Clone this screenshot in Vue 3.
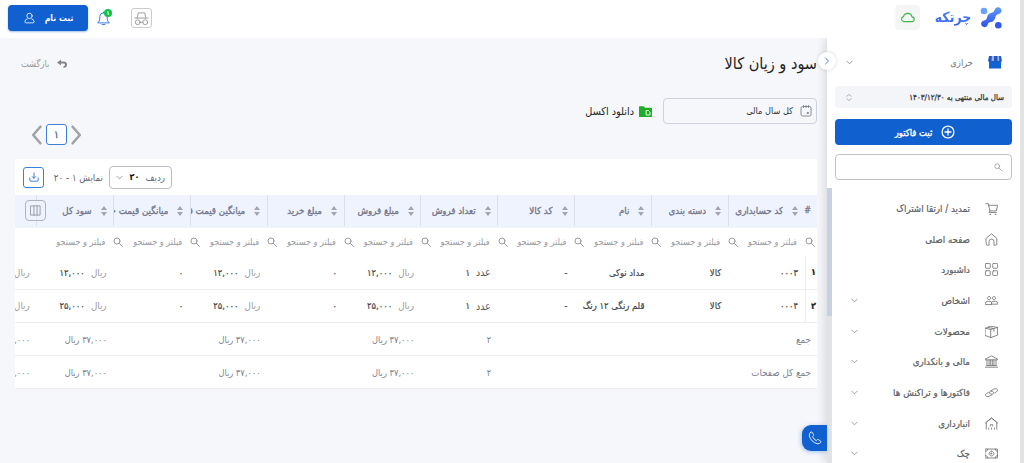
<script setup>
import { ref } from 'vue';

const search = ref('');

const menu = [
    { title: 'تمدید / ارتقا اشتراک', icon: 'cart' },
    { title: 'صفحه اصلی', icon: 'home' },
    { title: 'داشبورد', icon: 'grid' },
    { title: 'اشخاص', icon: 'people', sub: true },
    { title: 'محصولات', icon: 'box', sub: true },
    { title: 'مالی و بانکداری', icon: 'bank', sub: true },
    { title: 'فاکتورها و تراکنش ها', icon: 'link', sub: true },
    { title: 'انبارداری', icon: 'store', sub: true },
    { title: 'چک', icon: 'cash', sub: true },
];

const icons = {
    cart: 'M1 2h3l2 9h8l1.5-7H4.5M6 11l-1 2h9M6.5 15.2a.6.6 0 1 0 .1 0M13 15.2a.6.6 0 1 0 .1 0',
    home: 'M1.5 6.5 8 1l6.5 5.5V14q0 1-1 1H11v-4.500a3 3 0 0 0-6 0V15H2.5q-1 0-1-1z',
    grid: 'M1.5.5h4q1 0 1 1v4q0 1-1 1h-4q-1 0-1-1v-4q0-1 1-1zM10.5.5h4q1 0 1 1v4q0 1-1 1h-4q-1 0-1-1v-4q0-1 1-1zM1.5 9.5h4q1 0 1 1v4q0 1-1 1h-4q-1 0-1-1v-4q0-1 1-1zM10.5 9.5h4q1 0 1 1v4q0 1-1 1h-4q-1 0-1-1v-4q0-1 1-1z',
    people: 'M5 3a2 2 0 1 0 .1 0M11 3a2 2 0 1 0 .1 0M.5 12.5v-1Q.5 9 3 9h3q2 0 2 2v1.5zM8 12.5h7.500v-1Q15.500 9 13 9h-3Q8 9 8 11',
    box: 'M.5 4l6-2.5 9 1.5v9.500l-8.500 3-6.500-2.500zM.5 4L7 5.5 15.500 3M7 5.500v10M4 3l7 1.500v3',
    bank: 'M.5 5L8 1l7.500 4v1H.5zM2.500 6v7M5 6v7M7 6v7M9 6v7M11 6v7M13.500 6v7M2 13h12M.5 15h15',
    link: 'M8.500 10q-2.500.5-3-1.200-.3-1.800 1.500-2.800l3.500-2q2-1 3.500-.5 1.700.8 1.200 2.500-.4 1.200-3.200 2.500M7.500 6.500q2.500-.5 3 1.200.3 1.800-1.500 2.800l-3.500 2q-2 1-3.500.5-1.700-.8-1.200-2.500.4-1.200 3.200-2.500',
    store: 'M1.500 15V6.500L8 1.500l6.500 5V15M.5 7.500 8 1l7.500 6.500M4.500 15v-1.500M8 15v-1.500M11.500 15v-1.500M6.500 11v-1.500h3V11',
    cash: 'M.5 2.500h15v11H.5zM8 5a3 3 0 1 0 .1 0M.5 5.500q3 0 3-3M12.500 2.500q0 3 3 3M.5 10.500q3 0 3 3M12.500 13.500q0-3 3-3M7.500 7.500h1v1h-1z',
};

const columns = [
    'کد حسابداری',
    'دسته بندی',
    'نام',
    'کد کالا',
    'تعداد فروش',
    'مبلغ فروش',
    'مبلغ خرید',
    'میانگین قیمت فروش',
    'میانگین قیمت خرید',
    'سود کل',
];

const rows = [
    { id: '۱', code: '۰۰۰۳', name: 'مداد نوکی', price: '۱۲,۰۰۰' },
    { id: '۲', code: '۰۰۰۴', name: 'قلم رنگی ۱۲ رنگ', price: '۲۵,۰۰۰' },
];

const cells = (row) => [
    { value: row.code, number: true },
    { value: 'کالا' },
    { value: row.name },
    { value: '-' },
    { unit: 'عدد', value: '۱', dark: true },
    { unit: 'ریال', value: row.price, number: true },
    { value: '۰' },
    { unit: 'ریال', value: row.price, number: true },
    { value: '۰' },
    { unit: 'ریال', value: row.price, number: true },
    { unit: 'ریال', value: row.price, number: true },
];

const total = '۳۷,۰۰۰ ریال';
const sums = ['', '', '', '', '۲', total, '', total, '', total, total];
</script>

<template>
    <div class="page" dir="rtl">
        <div class="app">
            <header class="header">
                <div class="brand">
                    <svg class="brand-mark" viewBox="0 0 22 22">
                        <defs>
                            <linearGradient id="mark" x1="0" y1="0" x2="0" y2="1">
                                <stop offset="0" stop-color="#5d9bfa" />
                                <stop offset="1" stop-color="#2f50ea" />
                            </linearGradient>
                        </defs>
                        <g fill="url(#mark)">
                            <path d="M15.500 1.500a3.400 3.400 0 1 1 4.500 5c-2.500.7-4 1.400-4.500 3-.5 3.800-2.500 5.300-5 5.600-2 .4-2.500 1.200-3 3.200A3.400 3.400 0 1 1 2.500 14c2.500-.5 4-1 4.400-3 .5-3.400 2.400-5 5-5.300 1.800-.4 2.600-2 3.300-4.200z" />
                            <circle cx="4" cy="4" r="3.300" fill="#6aa2fb" />
                            <circle cx="18.300" cy="18.200" r="3.300" fill="#3158ec" />
                        </g>
                    </svg>
                    <span class="brand-name">چرتکه</span>
                    <span class="cloud">
                        <svg viewBox="0 0 16 12"><path d="M4 10.500h8.500a2.600 2.600 0 0 0 .4-5.200 4.800 4.800 0 0 0-9.300-.3A2.800 2.800 0 0 0 4 10.500z" /></svg>
                    </span>
                </div>
                <div class="header-actions">
                    <span class="guest">
                        <svg viewBox="0 0 16 16">
                            <path d="M3.500 7.500 4.500 2h7l1 5.500M1 7.500h14M6.500 12h3" />
                            <circle cx="4" cy="12" r="2.600" />
                            <circle cx="12" cy="12" r="2.600" />
                        </svg>
                    </span>
                    <span class="bell">
                        <svg viewBox="0 0 14 16"><path d="M1 12.500q2-1.500 2-4V6a4 4 0 0 1 8 0v2.500q0 2.500 2 4zM5.500 14.500h3M7 2V1" /></svg>
                        <i class="badge">۱</i>
                    </span>
                    <button class="signup">
                        <span>ثبت نام</span>
                        <svg viewBox="0 0 12 12">
                            <circle cx="6" cy="3.700" r="2.900" />
                            <path d="M3.500 7Q1 7.500 1 10q0 1.300 1.500 1.300h7Q11 11.300 11 10q0-2.500-2.500-3" />
                        </svg>
                    </button>
                </div>
            </header>

            <div class="body">
                <aside class="sidebar">
                    <div class="business">
                        <svg class="shop" viewBox="0 0 14 14">
                            <path d="M1 5h12v8.500H1z" fill="#1263d2" />
                            <path d="M1 1h12l1 5q-1.500 2-3.300.3Q9 8 7 6.300 5 8 3.300 6.300 1.500 8 0 6z" fill="#2459c2" />
                            <path d="M4 1h2v4.500Q5 6.500 3.500 5.500zM9.500 1H11l.3 4.500q-1 1-1.800 0z" fill="#9db2e2" />
                        </svg>
                        <span class="business-name">خرازی</span>
                        <svg class="chevron" viewBox="0 0 8 5"><path d="M1 1l3 3 3-3" /></svg>
                    </div>
                    <div class="fiscal">
                        <span>سال مالی منتهی به ۱۴۰۳/۱۲/۳۰</span>
                        <svg viewBox="0 0 7 9"><path d="M1 3l2.500-2L6 3M1 6l2.500 2L6 6" /></svg>
                    </div>
                    <button class="invoice">
                        <svg viewBox="0 0 14 14"><circle cx="7" cy="7" r="5.900" /><path d="M7 4v6M4 7h6" /></svg>
                        <span>ثبت فاکتور</span>
                    </button>
                    <label class="search">
                        <svg class="lens" viewBox="0 0 10 10"><circle cx="4" cy="4" r="3" /><path d="M6.300 6.300 9.500 9.500" /></svg>
                        <input v-model="search" type="text" />
                    </label>
                    <nav class="menu">
                        <a v-for="item in menu" :key="item.title" class="menu-item">
                            <svg class="menu-icon" viewBox="0 0 16 16"><path :d="icons[item.icon]" /></svg>
                            <span>{{ item.title }}</span>
                            <svg v-if="item.sub" class="chevron" viewBox="0 0 8 5"><path d="M1 1l3 3 3-3" /></svg>
                        </a>
                    </nav>
                    <div class="track"><div class="thumb"></div></div>
                    <button class="collapse"><svg viewBox="0 0 6 8"><path d="M1.500 1l3 3-3 3" /></svg></button>
                    <button class="phone">
                        <svg viewBox="0 0 16 16"><path d="M3 1.500Q1 3 1.500 5.500q2 7 9 9 2.500.5 4-1.500.6-1-.3-1.700l-2.500-1.500q-.8-.4-1.400.3l-.8.9Q6.500 9.500 5.200 6.500l.9-.9q.6-.6.2-1.400L5 1.700Q4.200.7 3 1.500z" /></svg>
                    </button>
                </aside>

                <main class="main">
                    <div class="title-row">
                        <h1>سود و زیان کالا</h1>
                        <a class="back">
                            <svg viewBox="0 0 10 9"><path d="M4 .5 0 3.500l4 3V4.500h2.500Q8 4.500 8 5.800 8 7 6.500 7.300V9Q10 8.500 10 5.800 10 2.500 6.500 2.500H4z" /></svg>
                            <span>بازگشت</span>
                        </a>
                    </div>

                    <div class="filters">
                        <div class="period">
                            <svg viewBox="0 0 12 12"><path d="M1 3q0-1.500 1.500-1.500h7Q11 1.500 11 3v6.500Q11 11 9.500 11h-7Q1 11 1 9.500zM3.500.5v2M6 .5v2M8.500.5v2M7.500 7.500h1v1h-1z" /></svg>
                            <span>کل سال مالی</span>
                        </div>
                        <a class="excel">
                            <svg viewBox="0 0 13 11">
                                <path d="M0 1q0-.7.700-.7h4L6 1.700h6.300q.7 0 .7.700v7.800q0 .7-.7.700H.7q-.7 0-.7-.7z" fill="#20ac2b" />
                                <path d="M7.500 4.500h2l1.500 1.500v3H7.500z" fill="none" stroke="#fff" stroke-width=".9" />
                            </svg>
                            <span>دانلود اکسل</span>
                        </a>
                    </div>

                    <div class="pager">
                        <svg viewBox="0 0 10 18"><path d="M1.500 1.500 8 9l-6.500 7.500" /></svg>
                        <span class="page-number">۱</span>
                        <svg viewBox="0 0 10 18"><path d="M8.500 1.500 2 9l6.500 7.500" /></svg>
                    </div>

                    <section class="card">
                        <div class="toolbar">
                            <div class="page-size">
                                <span>ردیف</span>
                                <b>۲۰</b>
                                <svg class="chevron" viewBox="0 0 8 5"><path d="M1 1l3 3 3-3" /></svg>
                            </div>
                            <span class="range">نمایش ۱ - ۲۰</span>
                            <button class="download">
                                <svg viewBox="0 0 12 12"><path d="M6 1v6.500M4 5.500l2 2 2-2M1 7v3q0 1 1 1h8q1 0 1-1V7" /></svg>
                            </button>
                        </div>

                        <div class="row head">
                            <div class="index">#</div>
                            <div v-for="column in columns" :key="column" class="cell">
                                <svg class="sort" viewBox="0 0 6 10"><path d="M3 0l3 4H0zM3 10l3-4H0z" /></svg>
                                <span class="label">{{ column }}</span>
                            </div>
                            <button class="columns-btn">
                                <svg viewBox="0 0 12 12"><path d="M1 1h10v10H1zM4.300 1v10M7.700 1v10" /></svg>
                            </button>
                        </div>

                        <div class="row filter">
                            <div v-for="column in columns" :key="column" class="cell">
                                <svg class="lens" viewBox="0 0 10 10"><circle cx="4" cy="4" r="3" /><path d="M6.300 6.300 9.500 9.500" /></svg>
                                <span>فیلتر و جستجو</span>
                            </div>
                        </div>

                        <div v-for="row in rows" :key="row.id" class="row data">
                            <div class="index">{{ row.id }}</div>
                            <div v-for="(cell, i) in cells(row)" :key="i" class="cell">
                                <span v-if="cell.unit" class="unit" :class="{ dark: cell.dark }">{{ cell.unit }}</span>
                                <span :class="{ number: cell.number }">{{ cell.value }}</span>
                            </div>
                        </div>

                        <div v-for="label in ['جمع', 'جمع کل صفحات']" :key="label" class="row sum">
                            <div class="index">{{ label }}</div>
                            <div v-for="(sum, i) in sums" :key="i" class="cell">{{ sum }}</div>
                        </div>
                    </section>
                </main>
            </div>
        </div>
    </div>
</template>

<style>
body {
    margin: 0;
    overflow: hidden;
}
</style>

<style scoped>
.page {
    box-sizing: border-box;
    height: 463px;
    padding-right: 4px;
    background: #e3e3e3;
    overflow: hidden;
    color: #55565a;
    font-family: 'DejaVu Sans Condensed', 'DejaVu Sans', sans-serif;
    font-size: 8px;
}

.page * {
    box-sizing: border-box;
}

.app {
    display: flex;
    flex-direction: column;
    height: 100%;
}

svg {
    display: block;
    flex: none;
    fill: none;
    stroke: currentColor;
    stroke-linecap: round;
    stroke-linejoin: round;
}

button {
    display: flex;
    align-items: center;
    justify-content: center;
    padding: 0;
    border: 0;
    font-family: inherit;
}

.header {
    display: flex;
    flex: none;
    justify-content: space-between;
    height: 38px;
    padding: 0 18px 0 8px;
    background: #fff;
}

.brand,
.header-actions {
    display: flex;
    align-items: center;
}

.brand-mark {
    width: 22px;
    height: 22px;
    margin-top: -3px;
    stroke: none;
}

.brand-name {
    width: 40px;
    margin: -4px 7px 0 13px;
    padding: 0 1px;
    background: linear-gradient(#548ef5, #3159e8);
    background-clip: text;
    color: transparent;
    font-size: 14px;
    font-weight: bold;
    line-height: 28px;
    text-align: center;
    white-space: nowrap;
}

.cloud {
    display: flex;
    align-items: center;
    justify-content: center;
    width: 25px;
    height: 25px;
    margin-top: -3px;
    border-radius: 4px;
    background: #f4f5f5;
    color: #43b649;
}

.cloud svg {
    width: 15px;
    height: 11px;
    stroke-width: 1.300;
}

.guest {
    display: flex;
    align-items: center;
    justify-content: center;
    width: 21px;
    height: 20px;
    margin: -2px 0 0 21px;
    border: 1px solid #ccc;
    border-radius: 3px;
    color: #999;
}

.guest svg {
    width: 15px;
    height: 15px;
}

.bell {
    position: relative;
    margin: -2px 0 0 9px;
    color: #2f73d9;
}

.bell svg {
    width: 13px;
    height: 15px;
}

.badge {
    position: absolute;
    top: -2px;
    right: -2px;
    width: 8px;
    height: 8px;
    border-radius: 50%;
    background: #05c44f;
    color: #fff;
    font-size: 6px;
    font-style: normal;
    font-weight: bold;
    line-height: 8px;
    text-align: center;
}

.signup {
    gap: 10px;
    width: 80px;
    height: 26px;
    padding-left: 1px;
    margin-top: -2px;
    border-radius: 4px;
    background: #1060d0;
    box-shadow: 0 1px 2px #1060d066;
    color: #fff;
    font-size: 8.700px;
    font-weight: bold;
}

.signup svg {
    width: 11px;
    height: 12px;
    stroke-width: .9;
}

.body {
    display: flex;
    flex: 1;
    min-height: 0;
}

.sidebar {
    position: relative;
    z-index: 1;
    display: flex;
    flex: none;
    flex-direction: column;
    width: 193px;
    padding: 0 8px;
    background: #fff;
    box-shadow: -3px 0 8px #0000001c;
    clip-path: inset(0 0 0 -30px);
}

.business {
    display: flex;
    flex: none;
    align-items: center;
    height: 48px;
    padding: 0 10px 0 11px;
}

.shop {
    width: 14px;
    height: 14px;
    stroke: none;
}

.business-name {
    margin-right: 15px;
    color: #777;
    font-size: 9.300px;
}

.chevron {
    width: 7px;
    height: 5px;
    margin-right: auto;
    color: #8d929a;
    stroke-width: 1;
}

.fiscal {
    display: flex;
    flex: none;
    align-items: center;
    justify-content: space-between;
    height: 22px;
    padding: 0 8px 0 11px;
    border-radius: 4px;
    background: #f3f5f8;
    color: #333;
    font-size: 7.900px;
    -webkit-text-stroke: .25px currentColor;
}

.fiscal svg {
    width: 6px;
    height: 9px;
    color: #8b9098;
    stroke-width: .8;
}

.invoice {
    flex: none;
    gap: 9px;
    height: 26px;
    margin-top: 11px;
    padding-left: 3px;
    border-radius: 4px;
    background: #1060d0;
    color: #fff;
    font-size: 9.400px;
    -webkit-text-stroke: .35px currentColor;
}

.invoice svg {
    width: 14px;
    height: 14px;
    stroke-width: 1.300;
}

.search {
    display: flex;
    flex: none;
    align-items: center;
    height: 26px;
    margin-top: 9px;
    padding: 0 9px;
    border: 1px solid #c2c2c4;
    border-radius: 4px;
}

.search input {
    width: 100%;
    border: 0;
    outline: 0;
    background: none;
}

.lens {
    width: 10px;
    height: 10px;
    color: #999ba0;
    stroke-width: 1;
}

.search .lens {
    width: 8px;
    height: 8px;
}

.menu {
    flex: none;
    margin-top: 13px;
}

.menu-item {
    display: flex;
    align-items: center;
    height: 30.700px;
    padding: 0 14px 0 16px;
    font-size: 9.700px;
    -webkit-text-stroke: .2px currentColor;
}

.menu-item span {
    margin-right: 15px;
    color: #5c5e62;
}

.menu-icon {
    width: 13px;
    height: 13px;
    color: #77797c;
    stroke-width: 1.100;
}

.track {
    position: absolute;
    top: 150px;
    bottom: 0;
    left: 0;
    width: 5px;
    background: #e2e3e5;
}

.thumb {
    height: 128px;
    background: #c8d0e2;
}

.collapse {
    position: absolute;
    top: 14px;
    left: -9px;
    width: 18px;
    height: 18px;
    border-radius: 50%;
    background: #fff;
    box-shadow: 0 0 4px #00000026;
    color: #4887e6;
}

.collapse svg {
    width: 6px;
    height: 8px;
}

.phone {
    position: absolute;
    top: 387px;
    left: -25px;
    width: 25px;
    height: 26px;
    border-radius: 9px 0 0 9px;
    background: #1060d0;
    box-shadow: -1px 1px 4px #1060d055;
    color: #fff;
}

.phone svg {
    width: 14px;
    height: 14px;
}

.main {
    display: flex;
    flex: 1;
    flex-direction: column;
    min-width: 0;
    padding: 0 10px 0 15px;
    background: #f5f7fb;
}

.title-row {
    display: flex;
    align-items: center;
    justify-content: space-between;
    height: 50px;
}

h1 {
    margin: 0;
    color: #222;
    font-size: 16.100px;
    font-weight: normal;
}

.back {
    display: flex;
    align-items: center;
    gap: 8px;
    padding-left: 6px;
    color: #999;
    font-size: 9.200px;
}

.back svg {
    width: 10px;
    height: 9px;
    fill: #858585;
    stroke: none;
}

.filters {
    display: flex;
    align-items: center;
    gap: 11px;
    height: 26px;
    margin-top: 10px;
}

.period {
    display: flex;
    align-items: center;
    gap: 7px;
    width: 154px;
    height: 26px;
    padding: 0 4px;
    border: 1px solid #cfd2dc;
    border-radius: 4px;
    color: #333;
    font-size: 9.100px;
}

.period svg {
    width: 12px;
    height: 12px;
    color: #7b7d8b;
    stroke-width: .9;
}

.excel {
    display: flex;
    align-items: center;
    gap: 5px;
    color: #222;
    font-size: 10.800px;
}

.excel svg {
    width: 13px;
    height: 11px;
    stroke: none;
}

.pager {
    display: flex;
    align-items: center;
    gap: 4px;
    width: 53px;
    height: 21px;
    margin: 0 auto 14px 14px;
    color: #a2a3a6;
}

.pager svg {
    width: 11px;
    height: 20px;
    stroke-width: 2.400;
}

.page-number {
    flex: none;
    width: 21px;
    height: 21px;
    border: 1px solid #3d7fdd;
    border-radius: 3px;
    background: #fff;
    color: #3d5aa0;
    font-size: 10px;
    line-height: 19px;
    text-align: center;
    -webkit-text-stroke: .25px currentColor;
}

.card {
    width: 802px;
    background: #fff;
    overflow: hidden;
}

.toolbar {
    display: flex;
    align-items: center;
    justify-content: flex-end;
    height: 36px;
    padding-left: 8px;
}

.page-size {
    display: flex;
    align-items: center;
    width: 63px;
    height: 23px;
    padding: 0 6px;
    border: 1px solid #bbbdc4;
    border-radius: 4px;
    color: #666b80;
    font-size: 9.700px;
}

.page-size b {
    margin-right: 6px;
    color: #111;
    font-size: 9px;
    letter-spacing: -.5px;
}

.range {
    width: 50px;
    margin: 0 6px 0 9px;
    color: #60636c;
    font-size: 9.700px;
    white-space: nowrap;
}

.download {
    width: 21px;
    height: 21px;
    border: 1px solid #3d7fdd;
    border-radius: 3px;
    background: #fff;
    color: #2f73d9;
}

.download svg {
    width: 10px;
    height: 10px;
    stroke-width: 1.100;
}

.row {
    position: relative;
    display: flex;
    height: 33.300px;
    border-bottom: 1px solid #ededf0;
    white-space: nowrap;
}

.index {
    flex: none;
    width: 12.400px;
}

.cell {
    display: flex;
    flex: none;
    align-items: center;
    width: 76.850px;
}

.head {
    border: 0;
    background: #eff3fd;
    color: #71758b;
    font-size: 9.700px;
    -webkit-text-stroke: .3px currentColor;
}

.head .index {
    padding-right: 6px;
    font-size: 9px;
    line-height: 31px;
}

.head .cell {
    height: 31px;
    padding-right: 6.500px;
    border-left: 1px solid #dcdfe8;
}

.sort {
    width: 6px;
    height: 10px;
    fill: #a2a5b0;
    stroke: none;
}

.label {
    margin-right: 9px;
    overflow: hidden;
}

.columns-btn {
    position: absolute;
    top: 5px;
    left: 10px;
    width: 21px;
    height: 21px;
    border: 1px solid #aeb3c2;
    border-radius: 4px;
    background: #eff3fd99;
    color: #9397a6;
}

.columns-btn svg {
    width: 11px;
    height: 11px;
}

.filter {
    height: 28px;
    padding-right: 2px;
    border: 0;
    color: #999ba1;
    font-size: 9px;
}

.filter .cell {
    gap: 8px;
}

.data {
    color: #45464a;
    font-size: 9.400px;
    -webkit-text-stroke: .2px currentColor;
}

.data .index {
    padding-right: 1px;
    border-left: 1px solid #ededf0;
    color: #222;
    font-size: 9px;
    font-weight: bold;
    line-height: 32px;
}

.data .cell {
    gap: 6px;
    padding-right: 6.500px;
}

.number {
    letter-spacing: -.6px;
}

.unit {
    color: #999;
    font-size: 9.700px;
    -webkit-text-stroke: 0;
}

.unit.dark {
    color: #55565a;
    font-size: 10.500px;
}

.sum {
    color: #7e8290;
    font-size: 9.200px;
}

.sum .index {
    padding-right: 6px;
    font-size: 9.700px;
    line-height: 33px;
}

.sum .cell {
    padding-right: 6px;
}
</style>
